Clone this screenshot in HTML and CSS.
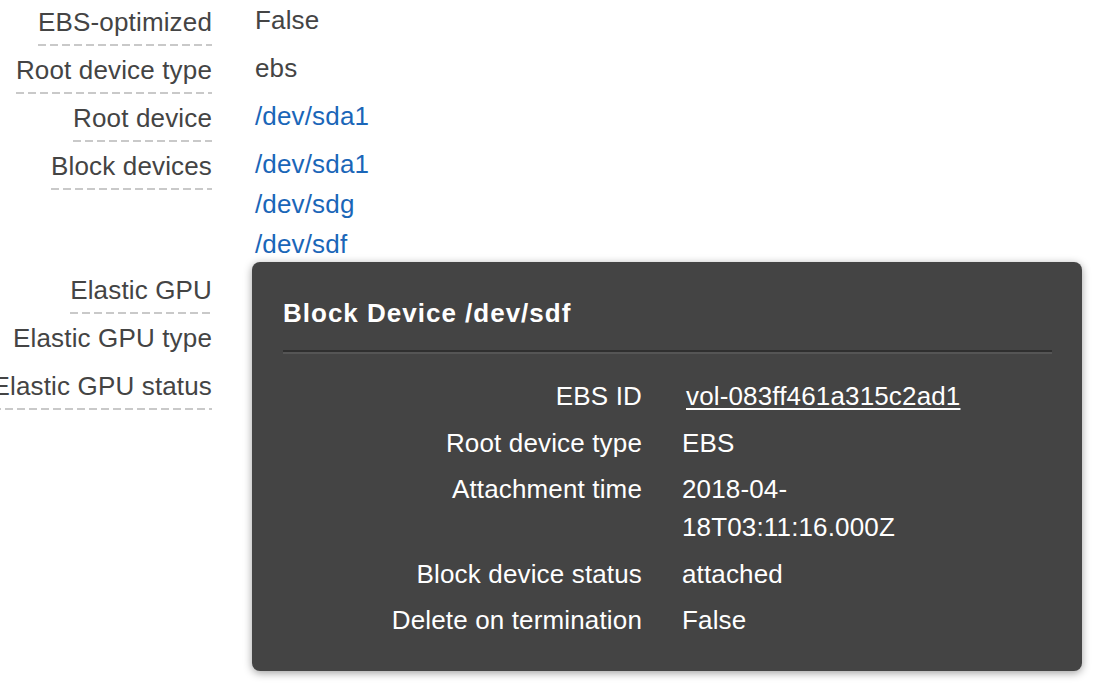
FILE: index.html
```html
<!DOCTYPE html>
<html lang="en">
<head>
<meta charset="utf-8">
<title>Instance details</title>
<link rel="stylesheet" href="styles.css">
</head>
<body>
<div class="details">
  <div class="row">
    <div class="label"><span class="help">EBS-optimized</span></div>
    <div class="value"><div class="line">False</div></div>
  </div>
  <div class="row">
    <div class="label"><span class="help">Root device type</span></div>
    <div class="value"><div class="line">ebs</div></div>
  </div>
  <div class="row">
    <div class="label"><span class="help">Root device</span></div>
    <div class="value"><div class="line"><a class="link" href="#">/dev/sda1</a></div></div>
  </div>
  <div class="row">
    <div class="label"><span class="help">Block devices</span></div>
    <div class="value">
      <div class="line"><a class="link" href="#">/dev/sda1</a></div>
      <div class="line"><a class="link" href="#">/dev/sdg</a></div>
      <div class="line"><a class="link" href="#">/dev/sdf</a></div>
    </div>
  </div>
  <div class="row">
    <div class="label"><span class="help">Elastic GPU</span></div>
    <div class="value"></div>
  </div>
  <div class="row">
    <div class="label"><span class="plain">Elastic GPU type</span></div>
    <div class="value"></div>
  </div>
  <div class="row">
    <div class="label"><span class="help">Elastic GPU status</span></div>
    <div class="value"></div>
  </div>
</div>

<div class="popover">
  <div class="popover-title">Block Device /dev/sdf</div>
  <div class="popover-rule"></div>
  <div class="popover-grid">
    <div class="p-label">EBS ID</div>
    <div class="p-value"><a class="p-link" href="#">vol-083ff461a315c2ad1</a></div>
    <div class="p-label">Root device type</div>
    <div class="p-value">EBS</div>
    <div class="p-label">Attachment time</div>
    <div class="p-value">2018-04-18T03:11:16.000Z</div>
    <div class="p-label">Block device status</div>
    <div class="p-value">attached</div>
    <div class="p-label">Delete on termination</div>
    <div class="p-value">False</div>
  </div>
</div>
</body>
</html>
```
FILE: styles.css
```css
html, body {
  margin: 0;
  padding: 0;
  background: #ffffff;
  overflow: hidden;
}

body {
  width: 1098px;
  height: 692px;
  position: relative;
  font-family: "Liberation Sans", Arial, Helvetica, sans-serif;
  font-size: 26px;
  letter-spacing: 0.15px;
  color: #444444;
}

.details {
  display: flex;
  flex-direction: column;
}

.row {
  display: grid;
  grid-template-columns: 212px 1fr;
  column-gap: 43px;
  padding-bottom: 2px;
  align-items: start;
}

.label {
  text-align: right;
  white-space: nowrap;
  direction: rtl;
}

.help,
.plain {
  direction: ltr;
  unicode-bidi: isolate;
  display: inline-block;
  line-height: 44px;
  padding-bottom: 2px;
}

.help {
  background-image: linear-gradient(to right, #c9c9c9 0, #c9c9c9 8px, transparent 8px, transparent 12px);
  background-size: 12px 2px;
  background-repeat: repeat-x;
  background-position: left bottom;
}

.value {
  padding-bottom: 2px;
}

.line {
  line-height: 40px;
  white-space: nowrap;
}

.link {
  color: #1a66b8;
  text-decoration: none;
}

.popover {
  position: absolute;
  left: 252px;
  top: 262px;
  width: 830px;
  box-sizing: border-box;
  padding: 36px 30px 32px 31px;
  background: #444444;
  border-radius: 8px;
  box-shadow: 0 2px 8px rgba(0, 0, 0, 0.38);
  color: #ffffff;
}

.popover-title {
  font-weight: bold;
  font-size: 26px;
  letter-spacing: 1px;
  line-height: 30px;
}

.popover-rule {
  margin-top: 22px;
  height: 2px;
  border-bottom: 2px solid #555555;
  background: #2f2f2f;
}

.popover-grid {
  margin-top: 23px;
  display: grid;
  grid-template-columns: 359px 300px;
  column-gap: 40px;
  row-gap: 8.5px;
  line-height: 38px;
}

.p-label {
  text-align: right;
  white-space: nowrap;
}

.p-value {
  overflow-wrap: normal;
}

.p-link {
  color: #ffffff;
  text-decoration: underline;
  text-underline-offset: 3px;
  margin-left: 4px;
}
```
